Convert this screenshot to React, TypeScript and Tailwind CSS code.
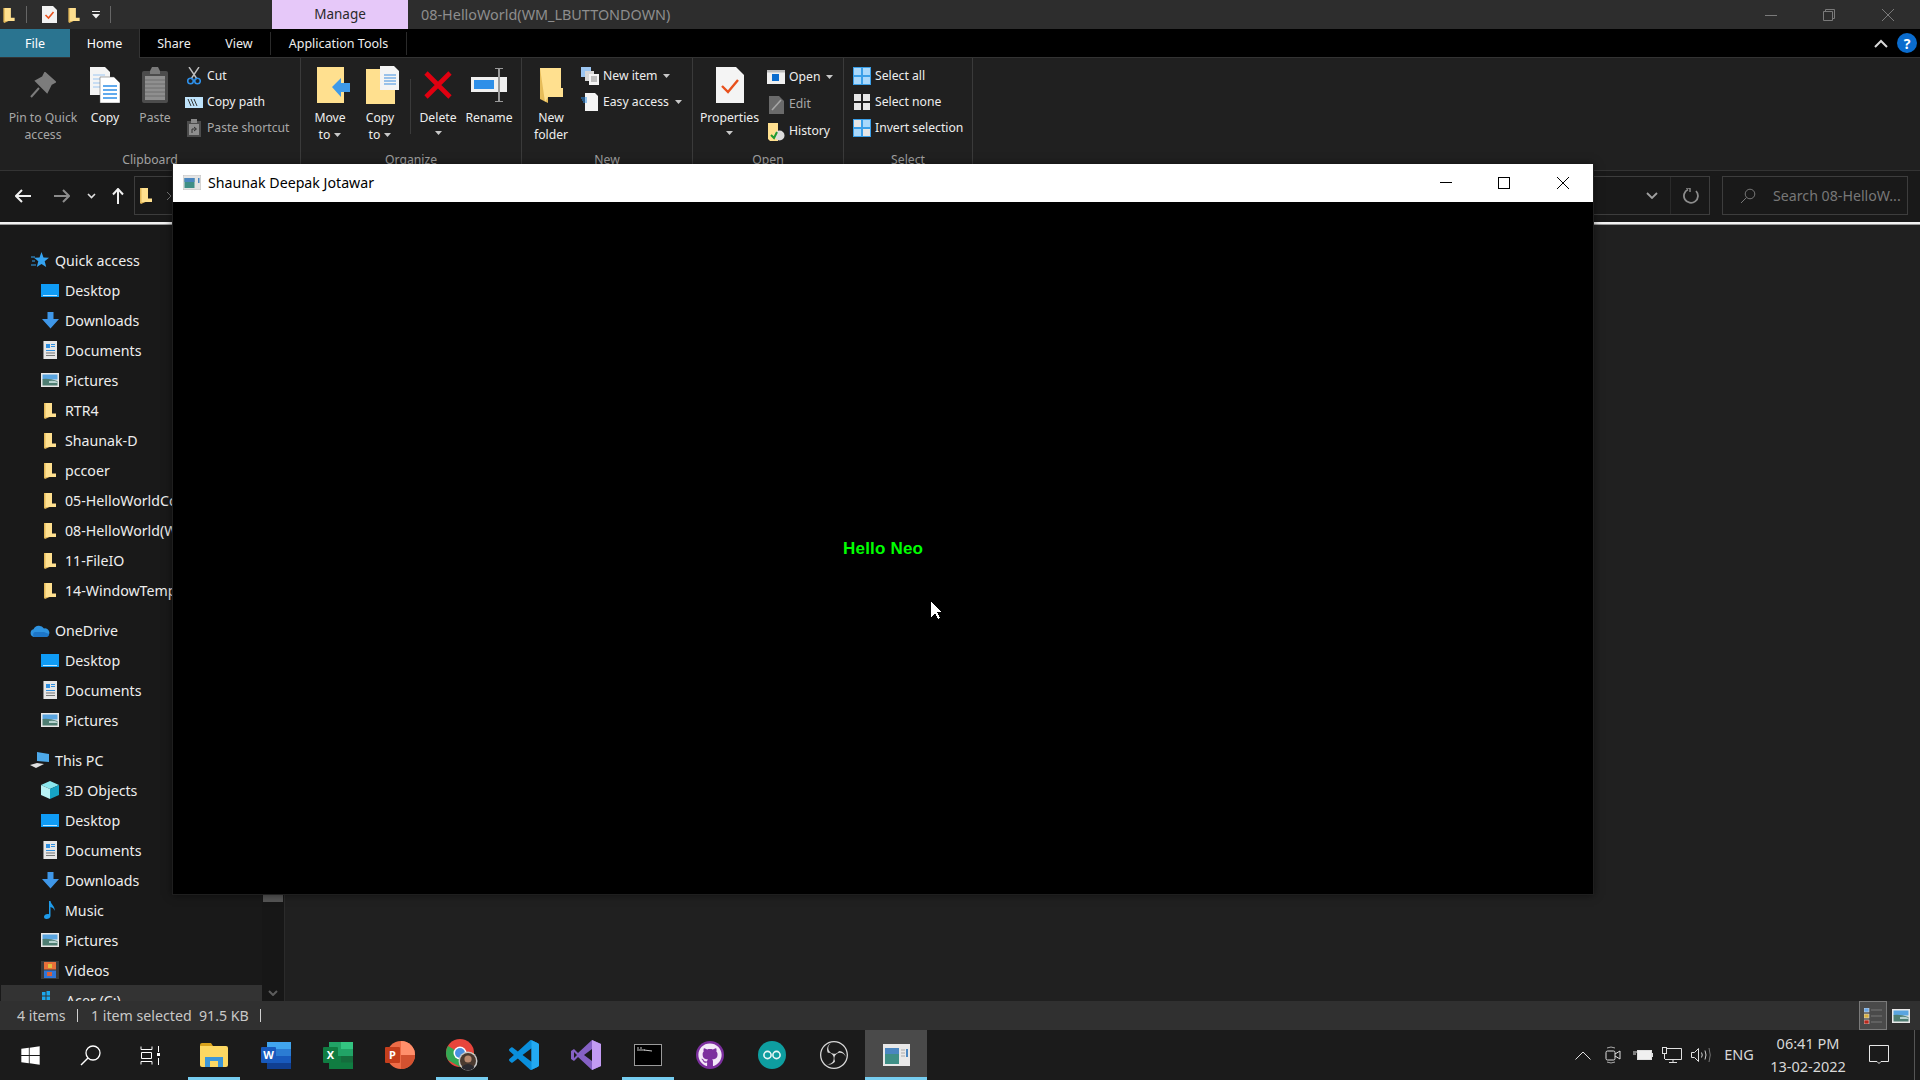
import React from "react";
import { FaGithub, FaWindows } from "react-icons/fa";
import { SiObsstudio } from "react-icons/si";

const Folder = ({ w = 12, h = 17 }: { w?: number; h?: number }) => (
  <svg width={w} height={h} viewBox="0 0 12 17">
    <path d="M0 1 L5.5 1 L5.5 15 L1 17 L0 16 Z" fill="#e3b95a" />
    <path d="M1.5 1 H8 V11.5 H12 V15 H1.5 Z" fill="#ffe08f" />
  </svg>
);
const Desktop = () => (
  <svg width="18" height="13" viewBox="0 0 18 13"><rect width="18" height="13" fill="#0f9bf5" /><rect x="2" y="11" width="14" height="1" fill="#bfe6ff" /></svg>
);
const Download = () => (
  <svg width="17" height="17" viewBox="0 0 17 17"><path d="M5.5 0 H11.5 V7 H17 L8.5 16.5 L0 7 H5.5 Z" fill="#3f97e8" /></svg>
);
const Doc = () => (
  <svg width="14" height="18" viewBox="0 0 14 18"><path d="M1 0 H14 V18 H1 Z" fill="#e6e6e6" /><path d="M1 0 H0 V18 H1 Z" fill="#8a8a8a" /><path d="M3 3 H7 V7 H3 Z M8 3 H12 V4 H8 Z M8 5 H12 V6 H8 Z M3 9 H12 V10 H3 Z" fill="#2e8fe0" /><path d="M3 11.5 H12 V12.5 H3 Z M3 14 H12 V15 H3 Z" fill="#777" /></svg>
);
const Pic = ({ w = 18, h = 14 }: { w?: number; h?: number }) => (
  <svg width={w} height={h} viewBox="0 0 18 14"><rect width="18" height="14" fill="#e8e8e8" /><rect x="1.5" y="1.5" width="15" height="5" fill="#5aa5e0" /><path d="M1.5 6 Q8 5 16.5 8 V12.5 H1.5 Z" fill="#4e7d72" /><path d="M8 8 Q13 7 16.5 9 V10 H8 Z" fill="#b8d3d0" /></svg>
);
const Star = () => (
  <svg width="18" height="16" viewBox="0 0 18 16"><path d="M10.5 0 L12.5 5.5 L18 5.8 L13.7 9.3 L15.2 15 L10.5 12 L5.8 15 L7.3 9.3 L3 5.8 L8.5 5.5 Z" fill="#35a3f0" /><path d="M0 5 H4 M1 9 H4 M0 13 H5" stroke="#35a3f0" strokeWidth="1" /></svg>
);
const Cloud = () => (
  <svg width="20" height="13" viewBox="0 0 20 13"><path d="M4 13 A4 4 0 0 1 3.5 5.2 A6 6 0 0 1 14 4.5 A4.3 4.3 0 0 1 16 13 Z" fill="#2e93e0" /><path d="M4 13 A3 3 0 0 1 5 8 L14 8 L19 10 A3 3 0 0 1 16 13 Z" fill="#1d76c8" /></svg>
);
const PC = () => (
  <svg width="20" height="18" viewBox="0 0 20 18"><path d="M7 1 L19 3 V11 L7 10 Z" fill="#4da9ea" /><path d="M0 14 L7 12 L14 13 L6 17 Z" fill="#e0e0e0" /></svg>
);
const Cube = () => (
  <svg width="18" height="18" viewBox="0 0 18 18"><path d="M9 0 L18 4 L9 8 L0 4 Z" fill="#8be8ee" /><path d="M0 4 L9 8 V18 L0 14 Z" fill="#b8f2f5" /><path d="M18 4 L9 8 V18 L18 14 Z" fill="#16a3c4" /></svg>
);
const Music = () => (
  <svg width="12" height="18" viewBox="0 0 12 18"><path d="M5 0 H6.5 C7 4 11.5 5 10.5 10 C10 7 8 6.5 6.5 6 V15 C6.5 17 4.5 18 2.5 18 C1 18 0 17 0 15.7 C0 14 2.5 12.5 5 13.2 Z" fill="#1e9bea" /></svg>
);
const Video = () => (
  <svg width="18" height="18" viewBox="0 0 18 18"><rect width="18" height="18" fill="#3a3a3a" /><rect x="3" y="1" width="12" height="7.5" fill="#e8703a" /><rect x="3" y="9.5" width="12" height="7.5" fill="#2f76d8" /><rect x="7" y="3" width="4" height="4" fill="#e0c040" /><rect x="6" y="11" width="5" height="4" fill="#d8603a" /></svg>
);
const Drive = () => (
  <svg width="18" height="18" viewBox="0 0 18 18"><path d="M0 1 H3.5 V4.5 H0 Z M4.5 0 H8 V4.5 H4.5 Z M0 5.5 H3.5 V9 H0 Z M4.5 5.5 H8 V9 H4.5 Z" fill="#1ca7ec" /><rect y="11" width="18" height="6" fill="#9a9a9a" /></svg>
);

const Row = ({ icon, label, top, mt }: { icon: React.ReactNode; label: string; top?: boolean; mt?: boolean }) => (
  <div className={`flex items-center h-[30px] shrink-0 ${mt ? "mt-[10px]" : ""}`}>
    <div className={`flex justify-center items-center ${top ? "w-[20px] ml-[30px] mr-[5px]" : "w-[18px] ml-[41px] mr-[6px]"}`}>{icon}</div>
    <span className="whitespace-nowrap pt-[2px]">{label}</span>
  </div>
);

const Caret = ({ cls = "" }: { cls?: string }) => (
  <svg width="7" height="4" viewBox="0 0 7 4" className={cls}><path d="M0 0 H7 L3.5 4 Z" fill="#c8c8c8" /></svg>
);

const Large = ({ w, icon, lines, caret, dim, iconCls = "" }: { w: number; icon: React.ReactNode; lines: string[]; caret?: boolean; dim?: boolean; iconCls?: string }) => (
  <div className={`flex flex-col items-center shrink-0 ${dim ? "text-[#a8a8a8]" : "text-[#eeeeee]"}`} style={{ width: w }}>
    <div className={`h-[40px] flex items-center justify-center ${iconCls}`}>{icon}</div>
    <div className="mt-[4px] leading-[17px] text-center whitespace-nowrap">
      {lines.map((l, i) => (
        <div key={i} className="flex items-center justify-center gap-[4px]">
          {l}
          {caret && lines.length > 1 && i === lines.length - 1 && <Caret />}
        </div>
      ))}
      {caret && lines.length === 1 && <div className="h-[17px] flex items-start justify-center pt-[5px]"><Caret /></div>}
    </div>
  </div>
);

const Small = ({ icon, label, caret, dim, h = 26 }: { icon: React.ReactNode; label: string; caret?: boolean; dim?: boolean; h?: number }) => (
  <div className={`flex items-center whitespace-nowrap ${dim ? "text-[#a8a8a8]" : "text-[#eeeeee]"}`} style={{ height: h }}>
    <div className="w-[20px] flex justify-center mr-[1px]">{icon}</div>
    <span className="ml-[2px]">{label}</span>
    {caret && <Caret cls="ml-[6px]" />}
  </div>
);

const Group = ({ w, label, children }: { w: number; label: string; children: React.ReactNode }) => (
  <div className="flex flex-col shrink-0 h-full border-r border-[#3a3a3a]" style={{ width: w }}>
    <div className="h-[93px] pt-[7px] flex">{children}</div>
    <div className="text-center text-[#a0a0a0] leading-[17px]">{label}</div>
  </div>
);

const Select = ({ kind }: { kind: number }) => {
  const c = kind === 0 ? [1, 1, 1, 1] : kind === 1 ? [0, 0, 0, 0] : [0, 1, 1, 0];
  return (
    <svg width="18" height="18" viewBox="0 0 18 18">
      {kind !== 1 && <rect width="18" height="18" fill="#3b9fe8" />}
      {[[1, 1], [10, 1], [1, 10], [10, 10]].map(([x, y], i) => (
        <rect key={i} x={x} y={y} width="7" height="7" fill={c[i] ? "#a9d8fb" : "#e6e6e6"} />
      ))}
    </svg>
  );
};

const TaskBtn = ({ children, line, active }: { children: React.ReactNode; line?: boolean; active?: boolean }) => (
  <div className={`relative w-[62px] h-full flex items-center justify-center shrink-0 ${active ? "bg-[#4a4a4a]" : ""}`}>
    {children}
    {line && <div className={`absolute bottom-0 h-[3px] bg-[#76cdf0] ${active ? "left-0 right-0" : "left-[5px] right-[5px]"}`} />}
  </div>
);

const TrayBox = ({ children, w }: { children: React.ReactNode; w: number }) => (
  <div className="flex justify-center items-center shrink-0" style={{ width: w }}>{children}</div>
);

export default function App() {
  return (
    <div className="relative w-[1920px] h-[1080px] overflow-hidden flex flex-col bg-[#1f1f1f] text-[12.2px] text-[#eeeeee] font-['Noto_Sans',sans-serif]">
      {/* Explorer title bar */}
      <div className="h-[29px] flex items-center bg-[#2d2d2d] shrink-0">
        <div className="w-[26px] pl-[3px] flex"><Folder w={12} h={16} /></div>
        <div className="w-px h-[17px] bg-[#666]" />
        <div className="ml-[15px] w-[15px]">
          <svg width="15" height="17" viewBox="0 0 15 17"><path d="M0 0 H11 L15 4 V17 H0 Z" fill="#f2f2f2" /><path d="M3.5 9 L6.5 12 L11.5 6" stroke="#e8501c" strokeWidth="1.6" fill="none" /></svg>
        </div>
        <div className="ml-[11px] w-[13px]"><Folder w={12} h={16} /></div>
        <div className="ml-[11px] w-[17px]">
          <svg width="8" height="8" viewBox="0 0 8 8"><path d="M0 0 H8 V1 H0 Z M0 3 H8 L4 7.5 Z" fill="#f0f0f0" /></svg>
        </div>
        <div className="w-px h-[17px] bg-[#666] ml-[1px]" />
        <div className="ml-[161px] w-[136px] h-full bg-[#e6c8f9] text-[#2a2a2a] text-[13.5px] flex items-center justify-center">Manage</div>
        <div className="ml-[13px] text-[#8e8e8e] text-[14.4px] whitespace-nowrap">08-HelloWorld(WM_LBUTTONDOWN)</div>
        <div className="ml-auto flex items-center h-full text-[#888]">
          <div className="w-[58px] flex justify-center">
            <svg width="12" height="12" viewBox="0 0 12 12"><path d="M0 6.5 H12" stroke="#7a7a7a" /></svg>
          </div>
          <div className="w-[58px] flex justify-center">
            <svg width="12" height="12" viewBox="0 0 12 12"><path d="M.5 2.5 H9.5 V11.5 H.5 Z M2.5 2.5 V.5 H11.5 V9.5 H9.5" stroke="#7a7a7a" fill="none" /></svg>
          </div>
          <div className="w-[60px] flex justify-center mr-[2px]">
            <svg width="12" height="12" viewBox="0 0 12 12"><path d="M0 0 L12 12 M12 0 L0 12" stroke="#7a7a7a" /></svg>
          </div>
        </div>
      </div>

      {/* Ribbon tabs */}
      <div className="h-[29px] flex items-center bg-black border-b border-[#333] shrink-0 text-[12.5px]">
        <div className="w-[70px] h-full pt-[2px] bg-[#2a7490] flex items-center justify-center text-white">File</div>
        <div className="w-[70px] h-[29px] pt-[2px] bg-[#202020] border-r border-[#333] flex items-center justify-center text-white">Home</div>
        <div className="w-[68px] pt-[2px] text-center">Share</div>
        <div className="w-[62px] pt-[2px] text-center">View</div>
        <div className="w-[137px] h-[23px] pt-[2px] border-x border-[#2a2a2a] flex items-center justify-center">Application Tools</div>
        <div className="ml-auto flex items-center">
          <svg width="14" height="9" viewBox="0 0 14 9" className="mr-[9px]"><path d="M1 8 L7 2 L13 8" stroke="#d8d8d8" strokeWidth="2" fill="none" /></svg>
          <div className="w-[20px] h-[20px] mr-[3px] rounded-full bg-[#0a6cce] text-white text-[14px] font-bold flex items-center justify-center">?</div>
        </div>
      </div>

      {/* Ribbon */}
      <div className="h-[112px] flex bg-[#202020] shrink-0 overflow-hidden">
        <Group w={301} label="Clipboard">
          <Large w={86} dim lines={["Pin to Quick", "access"]} icon={<svg width="26" height="26" viewBox="0 0 26 26"><path d="M15 1 L25 10 L21 12 L17 20 L6 9 L13 5 Z M9 16 L1 25" fill="#7c7c7c" stroke="#7c7c7c" strokeWidth="2" /></svg>} />
          <Large w={38} lines={["Copy"]} icon={<svg width="30" height="36" viewBox="0 0 30 36"><path d="M0 0 H15 L20 5 V28 H0 Z" fill="#f4f4f4" /><path d="M3 8 H15 M3 12 H15 M3 16 H15 M3 20 H15" stroke="#9cc6f2" /><path d="M10 10 H24 L30 16 V36 H10 Z" fill="#fff" stroke="#555" strokeWidth=".5" /><path d="M13 19 H27 M13 23 H27 M13 27 H27 M13 31 H27" stroke="#2e8fe8" strokeWidth="1.4" /></svg>} />
          <Large w={62} dim lines={["Paste"]} icon={<svg width="26" height="36" viewBox="0 0 26 36"><rect x="0" y="4" width="26" height="32" rx="2" fill="#4c4c4c" /><path d="M8 4 L10 0 H16 L18 4 V7 H8 Z" fill="#7a7a7a" /><rect x="3" y="9" width="20" height="24" fill="#8f8f8f" /><path d="M3 13 H23 M3 17 H23 M3 21 H23 M3 25 H23 M3 29 H23" stroke="#6e6e6e" /></svg>} />
          <div className="flex flex-col mt-[-2px] ml-[-2px]">
            <Small label="Cut" icon={<svg width="14" height="18" viewBox="0 0 14 18"><path d="M2 0 L10 12 M12 0 L4 12" stroke="#bfbfbf" strokeWidth="1.4" /><circle cx="3.5" cy="14" r="2.8" fill="none" stroke="#2e8fe8" strokeWidth="1.6" /><circle cx="10.5" cy="14" r="2.8" fill="none" stroke="#2e8fe8" strokeWidth="1.6" /></svg>} />
            <Small label="Copy path" icon={<svg width="18" height="11" viewBox="0 0 18 11"><rect width="18" height="11" fill="#bfe3fb" /><path d="M3 2 L6 9 M6 2 L9 9 M9 2 L12 9" stroke="#333" /></svg>} />
            <Small dim label="Paste shortcut" icon={<svg width="14" height="18" viewBox="0 0 14 18"><rect y="2" width="14" height="16" fill="#4c4c4c" /><rect x="4" width="6" height="4" fill="#8a8a8a" /><rect x="2" y="5" width="10" height="11" fill="#8f8f8f" /><path d="M5 14 V10 H9 M7 8 L9.5 10 L7 12" stroke="#333" fill="none" /></svg>} />
          </div>
        </Group>
        <Group w={221} label="Organize">
          <Large w={58} caret iconCls="ml-[7px]" lines={["Move", "to"]} icon={<svg width="33" height="36" viewBox="0 0 33 36"><rect width="27" height="36" fill="#ffe08f" /><path d="M15 20 L24 11 V16 H33 V25 H24 V30 Z" fill="#3f9ae8" /></svg>} />
          <Large w={42} caret iconCls="ml-[5px]" lines={["Copy", "to"]} icon={<svg width="33" height="38" viewBox="0 0 33 38"><path d="M0 3 H18 V10 H29 V38 H0 Z" fill="#ffe08f" /><path d="M14 0 H28 L33 5 V24 H14 Z" fill="#f4f4f4" /><path d="M18 9 H30 M18 12 H30 M18 15 H30 M18 18 H30" stroke="#3f8fe0" /></svg>} />
          <div className="w-[10px] flex justify-end"><div className="w-px h-[55px] mt-[14px] bg-[#3a3a3a]" /></div>
          <Large w={54} caret lines={["Delete"]} icon={<svg width="30" height="30" viewBox="0 0 30 30"><path d="M3 3 L27 27 M27 3 L3 27" stroke="#e10010" strokeWidth="4.6" /></svg>} />
          <Large w={48} lines={["Rename"]} icon={<svg width="36" height="34" viewBox="0 0 36 34"><rect y="9" width="36" height="15" fill="#f0f0f0" /><rect x="3" y="12" width="20" height="9" fill="#2e8fe8" /><path d="M24 0 H32 M28 0 V34 M24 34 H32" stroke="#9a9a9a" strokeWidth="2" fill="none" /></svg>} />
        </Group>
        <Group w={171} label="New">
          <Large w={58} lines={["New", "folder"]} icon={<svg width="23" height="35" viewBox="0 0 23 35"><path d="M0 0 L8 2 V35 L0 31 Z" fill="#e6bc5a" /><path d="M0 0 H21 V20 H23 V29 H8 L5 34 Z" fill="#ffe08f" /></svg>} />
          <div className="flex flex-col mt-[-2px]">
            <Small caret label="New item" icon={<svg width="18" height="18" viewBox="0 0 18 18"><rect width="10" height="10" fill="#9cc6f2" /><rect x="4" y="4" width="9" height="10" fill="#d8d8d8" /><rect x="8" y="7" width="10" height="11" fill="#f4f4f4" /><path d="M10 10 H16 M10 12 H16 M10 14 H16" stroke="#888" /></svg>} />
            <Small caret label="Easy access" icon={<svg width="18" height="18" viewBox="0 0 18 18"><path d="M4 0 H14 L17 3 V18 H4 Z" fill="#f4f4f4" /><path d="M0 5 H6 M1 7 H6 M2 9 H6" stroke="#2e8fe8" /></svg>} />
          </div>
        </Group>
        <Group w={151} label="Open">
          <Large w={73} caret lines={["Properties"]} icon={<svg width="28" height="36" viewBox="0 0 28 36"><path d="M0 0 H20 L28 8 V36 H0 Z" fill="#f4f4f4" /><path d="M6 19 L12 25 L22 13" stroke="#e8501c" strokeWidth="2.4" fill="none" /></svg>} />
          <div className="flex flex-col mt-[-2px]">
            <Small h={28} caret label="Open" icon={<svg width="18" height="14" viewBox="0 0 18 14"><rect width="18" height="14" fill="#f0f0f0" /><rect y="0" width="18" height="2.5" fill="#bbb" /><rect x="5" y="4" width="7" height="7" fill="#0a6cce" /></svg>} />
            <Small h={27} dim label="Edit" icon={<svg width="15" height="18" viewBox="0 0 15 18"><path d="M0 0 H10 L15 5 V18 H0 Z" fill="#6a6a6a" /><path d="M3 14 L12 4" stroke="#a5a5a5" strokeWidth="1.6" /></svg>} />
            <Small h={27} label="History" icon={<svg width="17" height="18" viewBox="0 0 17 18"><path d="M0 0 H10 V18 H2 L0 16 Z" fill="#ffe08f" /><circle cx="11.5" cy="12.5" r="5" fill="#dcdcdc" /><path d="M3 12 L6 15 L9 9" stroke="#1f9a30" strokeWidth="2" fill="none" /></svg>} />
          </div>
        </Group>
        <Group w={129} label="Select">
          <div className="flex flex-col mt-[-2px] ml-[8px]">
            <Small label="Select all" icon={<Select kind={0} />} />
            <Small label="Select none" icon={<Select kind={1} />} />
            <Small label="Invert selection" icon={<Select kind={2} />} />
          </div>
        </Group>
      </div>

      {/* Address bar */}
      <div className="h-[52px] pb-[2px] flex items-center bg-[#191919] border-t border-[#333] shrink-0">
        <svg width="16" height="14" viewBox="0 0 16 14" className="ml-[15px]"><path d="M7 1 L1 7 L7 13 M1 7 H16" stroke="#f0f0f0" strokeWidth="2" fill="none" /></svg>
        <svg width="16" height="14" viewBox="0 0 16 14" className="ml-[23px]"><path d="M9 1 L15 7 L9 13 M0 7 H15" stroke="#8c8c8c" strokeWidth="2" fill="none" /></svg>
        <svg width="9" height="6" viewBox="0 0 9 6" className="ml-[17px]"><path d="M1 1 L4.5 4.5 L8 1" stroke="#e0e0e0" strokeWidth="1.6" fill="none" /></svg>
        <svg width="12" height="16" viewBox="0 0 12 16" className="ml-[16px]"><path d="M1 6.5 L6 1 L11 6.5 M6 1 V16" stroke="#f0f0f0" strokeWidth="2" fill="none" /></svg>
        <div className="ml-[10px] w-[1576px] h-[39px] border border-[#3d3d3d] flex items-center">
          <div className="ml-[5px]"><Folder w={12} h={17} /></div>
          <svg width="6" height="10" viewBox="0 0 6 10" className="ml-[14px]"><path d="M1 1 L5 5 L1 9" stroke="#777" fill="none" /></svg>
          <div className="ml-auto flex items-center h-full">
            <svg width="12" height="7" viewBox="0 0 12 7"><path d="M1 1 L6 6 L11 1" stroke="#a0a0a0" strokeWidth="1.8" fill="none" /></svg>
            <div className="w-px h-full bg-[#2a2a2a] ml-[12px]" />
            <svg width="16" height="16" viewBox="0 0 16 16" className="ml-[12px] mr-[10px]"><path d="M5 1.5 A7 7 0 1 0 13 3" stroke="#8c8c8c" strokeWidth="1.8" fill="none" /><path d="M3 0 L7 0 L7 4" stroke="#8c8c8c" strokeWidth="1.4" fill="none" /></svg>
          </div>
        </div>
        <div className="ml-[12px] w-[186px] h-[39px] border border-[#3d3d3d] flex items-center text-[#777] text-[14.2px] whitespace-nowrap">
          <svg width="16" height="16" viewBox="0 0 16 16" className="ml-[17px]"><circle cx="10" cy="6" r="4.8" stroke="#777" fill="none" /><path d="M6.5 9.5 L1 15" stroke="#777" /></svg>
          <span className="ml-[17px]">Search 08-HelloW...</span>
        </div>
      </div>
      <div className="h-[3px] bg-[#f2f2f2] border-b border-[#999] shrink-0" />

      {/* Content */}
      <div className="flex-1 flex min-h-0">
        <div className="w-[262px] bg-[#191919] overflow-hidden text-[14.2px] pt-[20px] flex flex-col shrink-0">
          <Row top icon={<Star />} label="Quick access" />
          <Row icon={<Desktop />} label="Desktop" />
          <Row icon={<Download />} label="Downloads" />
          <Row icon={<Doc />} label="Documents" />
          <Row icon={<Pic />} label="Pictures" />
          {["RTR4", "Shaunak-D", "pccoer", "05-HelloWorldCons", "08-HelloWorld(WM", "11-FileIO", "14-WindowTemplate"].map((t) => (
            <Row key={t} icon={<Folder />} label={t} />
          ))}
          <Row top mt icon={<Cloud />} label="OneDrive" />
          <Row icon={<Desktop />} label="Desktop" />
          <Row icon={<Doc />} label="Documents" />
          <Row icon={<Pic />} label="Pictures" />
          <Row top mt icon={<PC />} label="This PC" />
          <Row icon={<Cube />} label="3D Objects" />
          <Row icon={<Desktop />} label="Desktop" />
          <Row icon={<Doc />} label="Documents" />
          <Row icon={<Download />} label="Downloads" />
          <Row icon={<Music />} label="Music" />
          <Row icon={<Pic />} label="Pictures" />
          <Row icon={<Video />} label="Videos" />
          <div className="bg-[#333] ml-px"><Row icon={<Drive />} label="Acer (C:)" /></div>
        </div>
        <div className="w-[23px] bg-[#171717] border-r border-[#2b2b2b] shrink-0 flex flex-col items-center pb-[5px]">
          <div className="w-[20px] h-[677px] bg-[#555]" />
          <svg width="10" height="6" viewBox="0 0 10 6" className="mt-auto"><path d="M1 1 L5 5 L9 1" stroke="#5c5c5c" strokeWidth="2" fill="none" /></svg>
        </div>
        <div className="flex-1 bg-[#202020]" />
      </div>

      {/* Status bar */}
      <div className="h-[29px] bg-[#303030] flex items-center text-[#c8c8c8] text-[14.2px] whitespace-nowrap shrink-0">
        <span className="ml-[17px] w-[60px]">4 items</span>
        <div className="w-px h-[13px] bg-[#d0d0d0]" />
        <span className="ml-[13px] w-[108px]">1 item selected</span>
        <span className="w-[61px]">91.5 KB</span>
        <div className="w-px h-[13px] bg-[#d0d0d0]" />
        <div className="ml-auto flex items-center h-full mr-[10px]">
          <div className="w-[28px] h-full border border-[#7a7a7a] bg-[#4a4a4a] flex items-center justify-center">
            <svg width="18" height="16" viewBox="0 0 18 16"><rect x="0" y="0" width="5" height="4" fill="#6aa8e8" stroke="#ddd" strokeWidth=".6" /><rect x="0" y="6" width="5" height="4" fill="#d8b040" stroke="#ddd" strokeWidth=".6" /><rect x="0" y="12" width="5" height="4" fill="#b8281c" stroke="#ddd" strokeWidth=".6" /><path d="M7 2 H18 M7 8 H18 M7 14 H18" stroke="#777" /></svg>
          </div>
          <div className="ml-[5px]"><Pic /></div>
        </div>
      </div>

      {/* Taskbar */}
      <div className="h-[50px] bg-[#1b1b1b] flex items-center shrink-0">
        <div className="w-[60px] flex justify-center"><FaWindows size={21} color="#fff" /></div>
        <div className="w-[60px] flex justify-center">
          <svg width="21" height="21" viewBox="0 0 21 21"><circle cx="13" cy="8" r="7" stroke="#fff" strokeWidth="1.3" fill="none" /><path d="M8 13 L1 20" stroke="#fff" strokeWidth="1.5" /></svg>
        </div>
        <div className="w-[60px] flex justify-center">
          <svg width="21" height="19" viewBox="0 0 21 19"><path d="M1 .5 V3.5 H12 V.5 M1 18.5 V15.5 H12 V18.5 M1.5 6.5 H11.5 V12.5 H1.5 Z" stroke="#fff" fill="none" /><rect x="18" y="0" width="1" height="6" fill="#fff" /><rect x="17" y="7" width="3" height="3" fill="#fff" /><rect x="18" y="12" width="1" height="7" fill="#fff" /></svg>
        </div>
        <div className="w-[3px]" />
        <TaskBtn line>
          <svg width="28" height="24" viewBox="0 0 28 24"><path d="M0 2 Q0 0 2 0 H11 L13 3 H0 Z" fill="#d8a21c" /><path d="M0 3 H26 Q28 3 28 5 V22 Q28 24 26 24 H2 Q0 24 0 22 Z" fill="#fdd862" /><path d="M5 14 H23 V24 H18 V18 H10 V24 H5 Z" fill="#3d97d8" /></svg>
        </TaskBtn>
        <TaskBtn>
          <svg width="30" height="27" viewBox="0 0 30 27"><rect x="6" width="24" height="27" rx="1.5" fill="#2b7cd3" /><rect x="6" width="24" height="7" fill="#41a5ee" /><rect x="6" y="14" width="24" height="7" fill="#185abd" /><rect x="6" y="21" width="24" height="6" fill="#103f91" /><rect y="5" width="15" height="16" rx="1" fill="#185abd" /><text x="7.5" y="17" textAnchor="middle" fontSize="11" fontWeight="700" fill="#fff">W</text></svg>
        </TaskBtn>
        <TaskBtn>
          <svg width="30" height="27" viewBox="0 0 30 27"><rect x="6" width="24" height="27" rx="1.5" fill="#21a366" /><rect x="6" y="0" width="12" height="7" fill="#21a366" /><rect x="18" width="12" height="7" fill="#33c481" /><rect x="18" y="7" width="12" height="7" fill="#21a366" /><rect x="6" y="14" width="24" height="13" fill="#107c41" /><rect x="18" y="14" width="12" height="6.5" fill="#185c37" opacity=".5" /><rect y="5" width="15" height="16" rx="1" fill="#107c41" /><text x="7.5" y="17" textAnchor="middle" fontSize="11" fontWeight="700" fill="#fff">X</text></svg>
        </TaskBtn>
        <TaskBtn>
          <svg width="30" height="28" viewBox="0 0 30 28"><circle cx="16" cy="14" r="14" fill="#ed6c47" /><path d="M16 0 A14 14 0 0 1 30 14 H16 Z" fill="#ff8f6b" /><path d="M16 14 H30 A14 14 0 0 1 16 28 Z" fill="#d35230" /><rect y="6" width="15" height="16" rx="1" fill="#c43e1c" /><text x="7.5" y="18" textAnchor="middle" fontSize="11" fontWeight="700" fill="#fff">P</text></svg>
        </TaskBtn>
        <TaskBtn line>
          <svg width="32" height="32" viewBox="0 0 32 32"><circle cx="14" cy="14" r="14" fill="#e8453c" /><path d="M2 7 A14 14 0 0 0 2 21 L14 28 L14 14 Z" fill="#34a853" /><path d="M14 14 L28 14 A14 14 0 0 1 14 28 Z" fill="#fbbc05" /><circle cx="14" cy="14" r="6.5" fill="#fff" /><circle cx="14" cy="14" r="5" fill="#4a90e2" /><circle cx="22" cy="22" r="9.5" fill="#c8c8c8" /><circle cx="22" cy="22" r="8" fill="#4a3a30" /><circle cx="22" cy="20" r="3.6" fill="#b98a70" /><path d="M15.5 28 Q22 22 28.5 28 A8 8 0 0 1 15.5 28 Z" fill="#2a2a30" /></svg>
        </TaskBtn>
        <TaskBtn>
          <svg width="30" height="30" viewBox="0 0 100 100"><path d="M96.46 10.8 75.86.9a6.23 6.23 0 0 0-7.1 1.2L29.45 38 12.3 25a4.16 4.16 0 0 0-5.32.24L1.47 30.2a4.17 4.17 0 0 0 0 6.17L16.34 50 1.48 63.6a4.17 4.17 0 0 0 0 6.18l5.5 5A4.16 4.16 0 0 0 12.3 75l17.14-13 39.32 35.9a6.22 6.22 0 0 0 7.1 1.2l20.6-9.9A6.25 6.25 0 0 0 100 83.5V16.4a6.25 6.25 0 0 0-3.54-5.6ZM75 72.7 45.2 50 75 27.3Z" fill="#0a8fdc" /><path d="M75 0.5 L96.46 10.8 A6.25 6.25 0 0 1 100 16.4 V83.5 A6.25 6.25 0 0 1 96.46 89.2 L75 99.5 Z" fill="#23a9f2" /></svg>
        </TaskBtn>
        <TaskBtn>
          <svg width="30" height="30" viewBox="0 0 30 30"><path d="M21 0 L30 4 V26 L21 30 L7 17 L3 21 L0 19 V11 L3 9 L7 13 Z M21 9 L13 15 L21 21 Z M3 12 V18 L6 15 Z" fill="#8661c5" fillRule="evenodd" /><path d="M21 0 L30 4 V26 L21 30 V21 V9 Z" fill="#c39bf3" /></svg>
        </TaskBtn>
        <TaskBtn line>
          <svg width="28" height="22" viewBox="0 0 28 22"><rect width="28" height="22" fill="#9a9a9a" /><rect x="1" y="1" width="26" height="20" fill="#000" /><path d="M3 4 H5 M6 4 H8 M3 6 H11" stroke="#c8c8c8" /><path d="M10 6 L18 7" stroke="#c8c8c8" /></svg>
        </TaskBtn>
        <TaskBtn>
          <div className="w-[28px] h-[28px] rounded-full bg-[#7c2f9e] flex items-center justify-center"><FaGithub size={24} color="#f3e8f8" /></div>
        </TaskBtn>
        <TaskBtn>
          <svg width="28" height="28" viewBox="0 0 28 28"><circle cx="14" cy="14" r="14" fill="#0e9ea0" /><circle cx="9.5" cy="14" r="3.6" stroke="#e8f6f6" strokeWidth="1.6" fill="none" /><circle cx="18.5" cy="14" r="3.6" stroke="#e8f6f6" strokeWidth="1.6" fill="none" /></svg>
        </TaskBtn>
        <TaskBtn>
          <SiObsstudio size={28} color="#d8d8d8" />
        </TaskBtn>
        <TaskBtn line active>
          <svg width="27" height="22" viewBox="0 0 27 22"><rect width="27" height="22" fill="#e8e8e8" /><rect x="2" y="4" width="14" height="16" fill="#3f8f86" /><rect x="2" y="4" width="14" height="6" fill="#4a86c0" /><rect x="23" y="5" width="2" height="8" fill="#4a86c0" /><path d="M18 6 H22 M18 9 H22 M18 12 H22" stroke="#aaa" /></svg>
        </TaskBtn>
        <div className="ml-auto flex items-center h-full text-[#e4e4e4]">
          <TrayBox w={30}><svg width="16" height="9" viewBox="0 0 16 9"><path d="M.5 8.5 L8 1 L15.5 8.5" stroke="#e0e0e0" fill="none" /></svg></TrayBox>
          <TrayBox w={30}><svg width="16" height="18" viewBox="0 0 16 18"><rect x="1" y="5" width="9" height="9" rx="1.5" stroke="#e0e0e0" fill="none" /><path d="M10 8 L15 5 V13 L10 10" stroke="#e0e0e0" fill="none" /><path d="M2 2 Q6 0 10 2 M2 16 Q6 18 10 16" stroke="#aaa" fill="none" /></svg></TrayBox>
          <TrayBox w={29}><svg width="20" height="12" viewBox="0 0 20 12"><path d="M0 5 H3 M1 2 V4 M3 2 V4" stroke="#e0e0e0" /><rect x="4.5" y="1.5" width="14" height="9" stroke="#e0e0e0" fill="#f0f0f0" /><rect x="19" y="4" width="1" height="4" fill="#e0e0e0" /></svg></TrayBox>
          <TrayBox w={29}><svg width="20" height="16" viewBox="0 0 20 16"><path d="M3 1.5 H19.5 V12.5 H3 M11 12.5 V15.5 M7 15.5 H15" stroke="#e0e0e0" fill="none" /><rect x=".5" y=".5" width="4" height="6" fill="#1b1b1b" stroke="#e0e0e0" /><path d="M2.5 6.5 V12" stroke="#e0e0e0" /></svg></TrayBox>
          <TrayBox w={30}><svg width="20" height="16" viewBox="0 0 20 16"><path d="M.5 5.5 H3.5 L7.5 1.5 V14.5 L3.5 10.5 H.5 Z" stroke="#e0e0e0" fill="none" /><path d="M10.5 5.5 Q12 8 10.5 10.5 M14 3.5 Q16 8 14 12.5" stroke="#d0d0d0" fill="none" /><path d="M18 1 Q20.5 8 18 15" stroke="#777" fill="none" /></svg></TrayBox>
          <TrayBox w={46}><span className="text-[14.5px] text-[#d8d8d8]">ENG</span></TrayBox>
          <div className="w-[92px] flex flex-col items-center text-[14.5px] leading-[23px] text-[#d8d8d8] whitespace-nowrap">
            <span>06:41 PM</span>
            <span>13-02-2022</span>
          </div>
          <TrayBox w={50}><svg width="20" height="20" viewBox="0 0 20 20"><path d="M.5 .5 H19.5 V16.5 H12 L10 18.5 L8 16.5 H.5 Z" stroke="#e8e8e8" fill="none" /></svg></TrayBox>
          <div className="w-px h-full bg-[#555] mr-[5px] ml-[10px]" />
        </div>
      </div>

      {/* Floating app window */}
      <div className="absolute left-[172px] top-[164px] w-[1422px] h-[731px] flex flex-col border-x border-b border-[#1f1f1f] shadow-[0_0_8px_rgba(0,0,0,0.5)]">
        <div className="h-[38px] pb-[1px] bg-white flex items-center text-black text-[14.2px] shrink-0">
          <svg width="18" height="15" viewBox="0 0 18 15" className="ml-[10px]"><rect width="18" height="15" fill="#e4e4e4" stroke="#aaa" strokeWidth=".5" /><rect x="1.5" y="3" width="10" height="10" fill="#3f8f86" /><rect x="1.5" y="3" width="10" height="4" fill="#4a86c0" /><rect x="15" y="3" width="1.5" height="5" fill="#4a86c0" /></svg>
          <span className="ml-[7px]">Shaunak Deepak Jotawar</span>
          <div className="ml-auto flex items-center mr-[1px]">
            <div className="w-[58px] flex justify-center"><svg width="12" height="12" viewBox="0 0 12 12"><path d="M0 5.5 H12" stroke="#000" /></svg></div>
            <div className="w-[58px] flex justify-center"><svg width="12" height="12" viewBox="0 0 12 12"><rect x=".5" y=".5" width="11" height="11" stroke="#000" fill="none" /></svg></div>
            <div className="w-[59px] flex justify-center"><svg width="12" height="12" viewBox="0 0 12 12"><path d="M0 0 L12 12 M12 0 L0 12" stroke="#000" /></svg></div>
          </div>
        </div>
        <div className="flex-1 bg-black relative">
          <div className="absolute left-[670px] top-[337px] text-[#00ff00] text-[17px] leading-[20px] font-bold font-['Liberation_Sans',sans-serif] tracking-[0.2px] whitespace-nowrap">Hello Neo</div>
          <svg width="11" height="17" viewBox="0 0 11 17" className="absolute left-[758px] top-[400px]" shapeRendering="crispEdges"><path d="M0 0 L10 10 H6 L9 16 L7 17 L4 11 L0 15 Z" fill="#fff" /></svg>
        </div>
      </div>
    </div>
  );
}
